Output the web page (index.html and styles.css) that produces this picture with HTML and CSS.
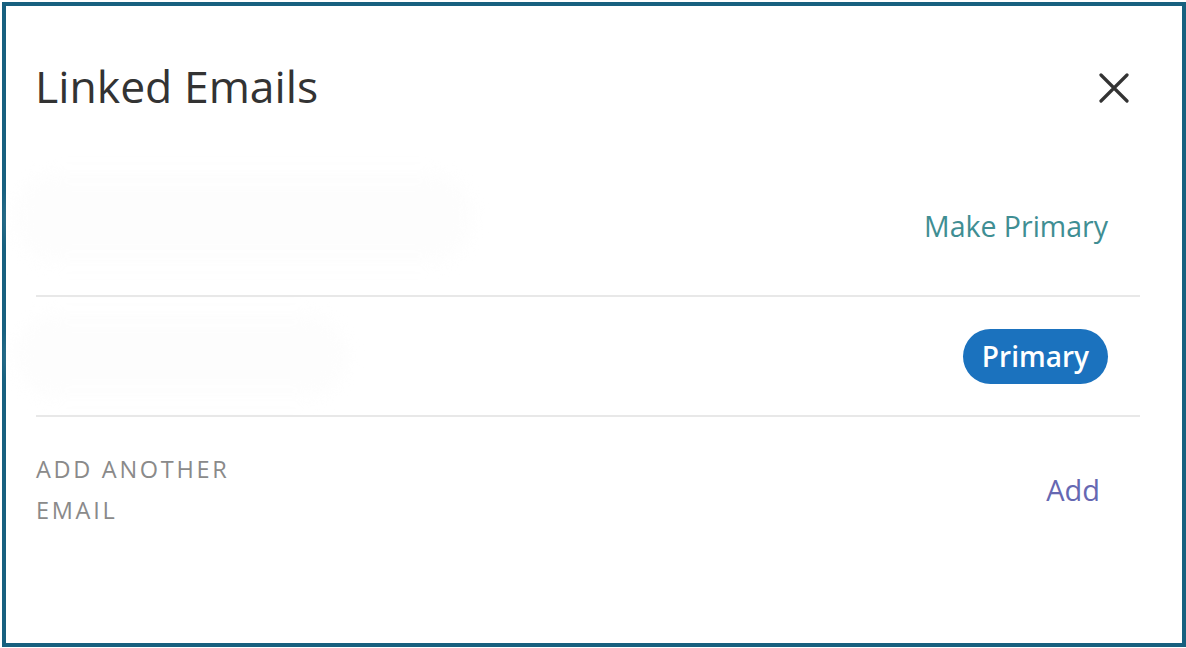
FILE: index.html
```html
<!DOCTYPE html>
<html lang="en">
<head>
<meta charset="utf-8">
<title>Linked Emails</title>
<link rel="stylesheet" href="styles.css">
</head>
<body>
<div class="modal">
  <div class="header">
    <h1 class="title">Linked Emails</h1>
    <button class="close" aria-label="Close">
      <svg width="30" height="30" viewBox="0 0 30 30"><path d="M2 2 L28 28 M28 2 L2 28" stroke="#333" stroke-width="3.2" stroke-linecap="round" fill="none"/></svg>
    </button>
  </div>
  <div class="list">
    <div class="row row-first">
      <div class="redacted redacted-1"></div>
      <a class="make-primary" href="#">Make Primary</a>
    </div>
    <div class="row row-second">
      <div class="redacted redacted-2"></div>
      <span class="pill">Primary</span>
    </div>
    <div class="row row-add">
      <div class="add-label">ADD ANOTHER<br>EMAIL</div>
      <a class="add-link" href="#">Add</a>
    </div>
  </div>
</div>
</body>
</html>
```

FILE: styles.css
```css
html, body {
  margin: 0;
  padding: 0;
  background: #ffffff;
}
body {
  padding: 2px 0 0 2px;
  font-family: "Open Sans", "Noto Sans", sans-serif;
}
.modal {
  box-sizing: border-box;
  width: 1184px;
  height: 645px;
  border: 4px solid #17607f;
  background: #ffffff;
}
.header {
  display: flex;
  justify-content: space-between;
  align-items: flex-start;
  padding: 51px 53px 0 29px;
}
.title {
  margin: 0;
  font-size: 44.5px;
  line-height: 58px;
  font-weight: 400;
  color: #333333;
}
.close {
  margin-top: 16px;
  padding: 0;
  border: 0;
  background: none;
  width: 30px;
  height: 30px;
  display: flex;
}
.list {
  margin: 0 42px 0 30px;
}
.row {
  display: flex;
  justify-content: space-between;
  align-items: center;
  border-bottom: 2px solid #e8e8e8;
}
.row-first {
  height: 138px;
  padding-top: 42px;
}
.row-second {
  height: 118px;
}
.row-add {
  border-bottom: 0;
  padding: 32px 0;
}
.redacted {
  background: #fdfdfd;
  border-radius: 40px;
  filter: blur(8px);
  margin-left: -20px;
}
.redacted-1 {
  width: 455px;
  height: 88px;
  margin-top: -16px;
}
.redacted-2 {
  width: 330px;
  height: 82px;
}
.make-primary {
  font-size: 28.5px;
  line-height: 40px;
  color: #3f8e93;
  text-decoration: none;
  margin-right: 32px;
}
.pill {
  display: inline-block;
  background: #1b72be;
  color: #ffffff;
  font-size: 28px;
  font-weight: 600;
  line-height: 55px;
  height: 55px;
  padding: 0 19px;
  border-radius: 28px;
  margin-right: 32px;
}
.add-label {
  font-size: 23.5px;
  line-height: 41px;
  letter-spacing: 2.7px;
  color: #8a8a8a;
}
.add-link {
  font-size: 29px;
  line-height: 40px;
  color: #6668b2;
  text-decoration: none;
  margin-right: 40px;
}
```
